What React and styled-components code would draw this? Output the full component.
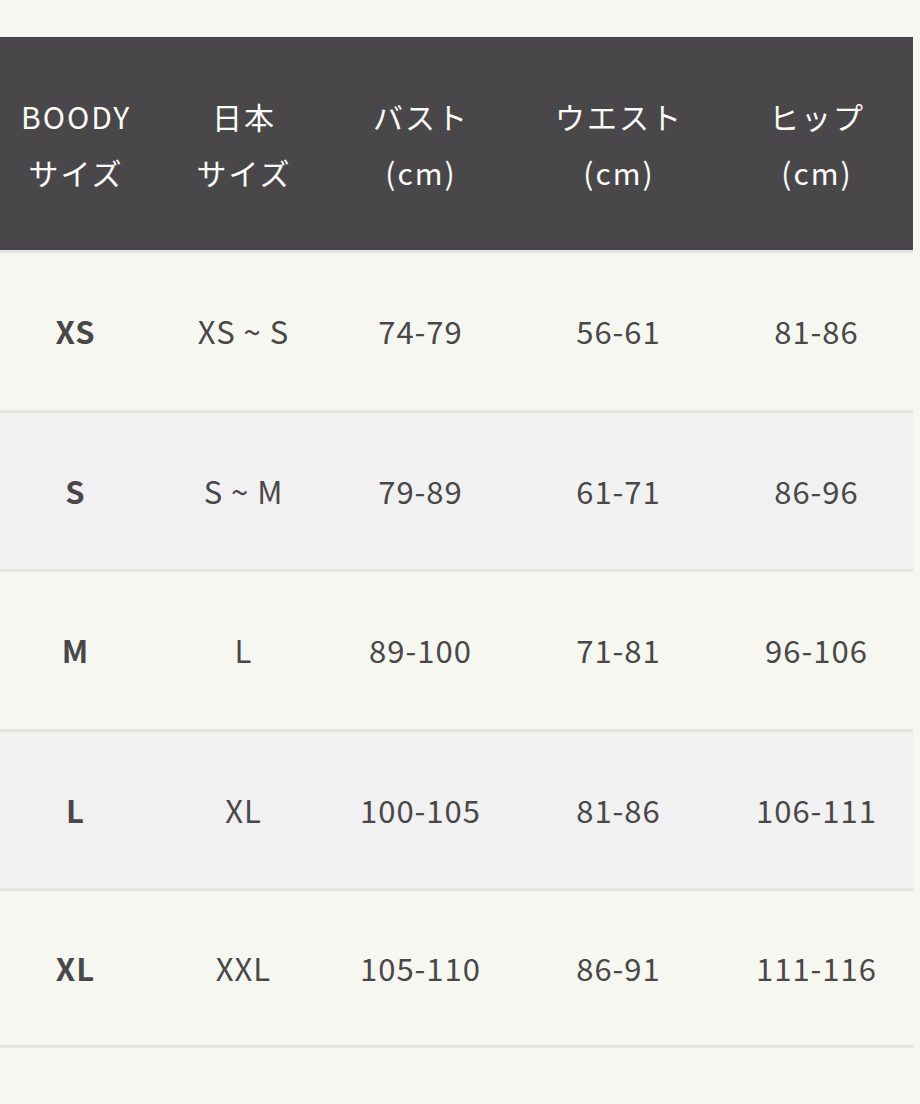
import React from "react";
import styled, { createGlobalStyle } from "styled-components";

const GlobalStyle = createGlobalStyle`
  html, body {
    margin: 0;
    padding: 0;
    background: #f7f7f2;
  }
  body {
    font-family: "Noto Sans CJK JP", "Noto Sans", sans-serif;
    color: #4a4749;
  }
`;

const rows = [
  ["XS", "XS ~ S", "74-79", "56-61", "81-86"],
  ["S", "S ~ M", "79-89", "61-71", "86-96"],
  ["M", "L", "89-100", "71-81", "96-106"],
  ["L", "XL", "100-105", "81-86", "106-111"],
  ["XL", "XXL", "105-110", "86-91", "111-116"],
];

const headers = [
  ["BOODY", "サイズ"],
  ["日本", "サイズ"],
  ["バスト", "(cm)"],
  ["ウエスト", "(cm)"],
  ["ヒップ", "(cm)"],
];

function App() {
  return (
    <>
      <GlobalStyle />
      <Page>
        <Table>
          <HeadRow>
            {headers.map((h, i) => (
              <HeadCell key={i}>
                {h[0]}
                <br />
                {h[1]}
              </HeadCell>
            ))}
          </HeadRow>
          {rows.map((r, i) => (
            <Row key={i} $alt={i % 2 === 1} $last={i === rows.length - 1}>
              {r.map((c, j) => (
                <Cell key={j} $bold={j === 0}>
                  {c}
                </Cell>
              ))}
            </Row>
          ))}
        </Table>
      </Page>
    </>
  );
}

const Page = styled.div`
  padding-top: 37px;
  width: 920px;
  min-height: 1104px;
  box-sizing: border-box;
`;

const Table = styled.div`
  width: 913px;
`;

const cols = "150px 186px 168px 228px 168px";

const HeadRow = styled.div`
  display: grid;
  grid-template-columns: ${cols};
  align-items: center;
  height: 213px;
  background: #49474a;
  border-top: 1px solid #3c3a3d;
  box-sizing: border-box;
`;

const HeadCell = styled.div`
  text-align: center;
  color: #fbfbf8;
  font-size: 30px;
  font-weight: 400;
  line-height: 56px;
  letter-spacing: 2px;
  padding-left: 2px;
  padding-bottom: 1px;
`;

const Row = styled.div`
  display: grid;
  grid-template-columns: ${cols};
  align-items: center;
  height: 159.5px;
  box-sizing: border-box;
  border-top: 3px solid #e4e4e1;
  border-bottom: ${(p) => (p.$last ? "3px solid #e4e4e1" : "none")};
  background: ${(p) => (p.$alt ? "#f1f1f1" : "#f7f7f2")};
`;

const Cell = styled.div`
  text-align: center;
  font-size: 31px;
  font-weight: ${(p) => (p.$bold ? 700 : 400)};
  letter-spacing: 1px;
  padding-left: 1px;
  color: #4a4749;
  padding-bottom: 1px;
`;

export default App;
